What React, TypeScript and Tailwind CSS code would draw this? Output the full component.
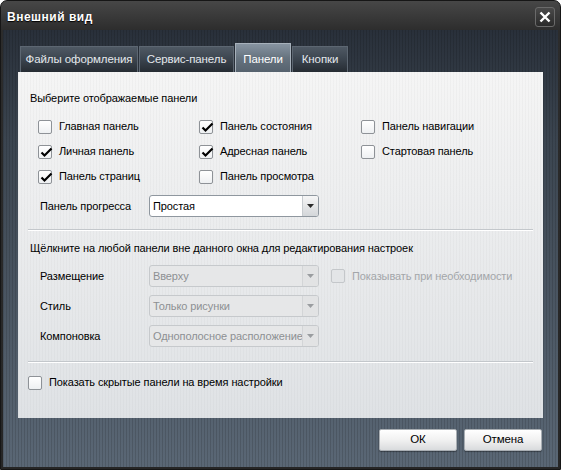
import clsx from 'clsx';

function Box({ checked, disabled }: { checked?: boolean; disabled?: boolean }) {
  return (
    <span
      className={clsx(
        'relative w-[14px] h-[14px] rounded-[2px] border shrink-0',
        disabled
          ? 'border-[#c4c7ca] bg-[#e3e5e7]'
          : 'border-[#8e9297] bg-[linear-gradient(#ffffff,#eef0f2)]'
      )}
    >
      {checked && (
        <svg className="absolute left-[1px] top-[1px]" width="13" height="11" viewBox="0 0 13 11">
          <path d="M1.5 5.5 L4.5 8.5 L11.5 1.5" fill="none" stroke="#000" strokeWidth="2.2" />
        </svg>
      )}
    </span>
  );
}

function Check({ label, checked, disabled }: { label: string; checked?: boolean; disabled?: boolean }) {
  return (
    <div className="flex items-center gap-[7px] h-[25px]">
      <Box checked={checked} disabled={disabled} />
      <span className={disabled ? 'text-[#a3a6a9]' : 'text-black'}>{label}</span>
    </div>
  );
}

function Select({ value, disabled }: { value: string; disabled?: boolean }) {
  return (
    <div
      className={clsx(
        'w-[170px] h-[22px] flex rounded-[3px] border overflow-hidden',
        disabled ? 'border-[#c6c9cc] bg-[#e6e7e8] text-[#8d9093]' : 'border-[#8f979f] bg-white text-black'
      )}
    >
      <div className="flex-1 min-w-0 pl-[3px] flex items-center whitespace-nowrap overflow-hidden">{value}</div>
      <div
        className={clsx(
          'w-[16px] shrink-0 flex items-center justify-center border-l',
          disabled ? 'border-[#d3d5d7] bg-[#e2e3e4]' : 'border-[#c7cbcf] bg-[linear-gradient(#f6f6f6,#d3d6d9)]'
        )}
      >
        <svg width="7" height="4" viewBox="0 0 7 4">
          <path d="M0 0H7L3.5 4Z" fill={disabled ? '#9a9da0' : '#2a2a2a'} />
        </svg>
      </div>
    </div>
  );
}

function Row({ label, children }: { label: string; children: React.ReactNode }) {
  return (
    <div className="flex items-center h-[30px]">
      <span className="w-[109px] shrink-0">{label}</span>
      {children}
    </div>
  );
}

function Sep() {
  return <div className="mx-[10px] h-[2px] border-t border-[#c3c7cb] bg-white" />;
}

const tabs = [
  { name: 'Файлы оформления', w: 'w-[118px]' },
  { name: 'Сервис-панель', w: 'w-[95px]' },
  { name: 'Панели', w: 'w-[56px]', active: true },
  { name: 'Кнопки', w: 'w-[56px]' },
];

export default function App() {
  return (
    <div className="w-[561px] h-[470px] bg-white font-['Liberation_Sans',Arial,sans-serif] text-[11px] tracking-[-0.1px] select-none">
      <div className="w-full h-full flex flex-col rounded-t-[7px] border border-[#161616] bg-[linear-gradient(#474747,#2c2c2c_30px,#262626)]">
        {/* Title bar */}
        <div className="h-[29px] shrink-0 flex items-center justify-between pl-[6px] pr-[5px] pt-[3px]">
          <span className="text-white font-bold text-[12px] tracking-[0.5px] [text-shadow:0_1px_1px_#000]">
            Внешний вид
          </span>
          <div className="w-[20px] h-[20px] rounded-[3px] border border-[#6a6a6a] bg-[linear-gradient(#4a4a4a,#2a2a2a)] flex items-center justify-center">
            <svg width="12" height="12" viewBox="0 0 12 12">
              <path d="M1.5 1.5L10.5 10.5M10.5 1.5L1.5 10.5" stroke="#fff" strokeWidth="2.4" />
            </svg>
          </div>
        </div>

        {/* Body */}
        <div className="flex-1 mx-[2px] mb-[2px] flex flex-col px-[15px] pt-[13px] pb-[15px] bg-[repeating-linear-gradient(90deg,rgba(0,0,0,0.13)_0px,rgba(0,0,0,0.13)_1px,transparent_1px,transparent_3px),linear-gradient(#29303a,#3b4550_25%,#5a6775)]">
          {/* Tabs */}
          <div className="flex items-end gap-[1px] h-[29px] ml-[2px]">
            {tabs.map((t) =>
              t.active ? (
                <div
                  key={t.name}
                  className={clsx(
                    t.w,
                    'h-[29px] pt-[3px] flex items-center justify-center text-white text-[11.5px] border border-b-0 border-[#a7b1bb] bg-[linear-gradient(#8794a1,#66737f_50%,#56626e)]'
                  )}
                >
                  {t.name}
                </div>
              ) : (
                <div
                  key={t.name}
                  className={clsx(
                    t.w,
                    'h-[26px] flex items-center justify-center text-[#e4e8ec] text-[11.5px] border border-b-0 border-[#5d6772] bg-[linear-gradient(#4f5964,#3b444e_50%,#262c33)]'
                  )}
                >
                  {t.name}
                </div>
              )
            )}
          </div>

          {/* Panel */}
          <div className="h-[346px] flex flex-col text-black bg-[repeating-linear-gradient(90deg,rgba(0,0,0,0.025)_0px,rgba(0,0,0,0.025)_1px,transparent_1px,transparent_3px),linear-gradient(#f5f5f5,#dfe2e5)]">
            <div className="pl-[12px] mt-[19px] h-[14px] leading-[14px]">Выберите отображаемые панели</div>

            <div className="grid grid-cols-[161px_162px_162px] pl-[20px] mt-[9px]">
              <Check label="Главная панель" />
              <Check label="Панель состояния" checked />
              <Check label="Панель навигации" />
              <Check label="Личная панель" checked />
              <Check label="Адресная панель" checked />
              <Check label="Стартовая панель" />
              <Check label="Панель страниц" checked />
              <Check label="Панель просмотра" />
            </div>

            <div className="pl-[22px] mt-[6px] flex items-center h-[22px]">
              <span className="w-[109px] shrink-0">Панель прогресса</span>
              <Select value="Простая" />
            </div>

            <div className="mt-[12px]">
              <Sep />
            </div>

            <div className="pl-[12px] mt-[10px] h-[14px] leading-[14px]">
              Щёлкните на любой панели вне данного окна для редактирования настроек
            </div>

            <div className="pl-[22px] mt-[6px] flex flex-col">
              <Row label="Размещение">
                <Select value="Вверху" disabled />
                <div className="ml-[12px]">
                  <Check label="Показывать при необходимости" disabled />
                </div>
              </Row>
              <Row label="Стиль">
                <Select value="Только рисунки" disabled />
              </Row>
              <Row label="Компоновка">
                <Select value="Однополосное расположение" disabled />
              </Row>
            </div>

            <div className="mt-[10px]">
              <Sep />
            </div>

            <div className="pl-[10px] mt-[7px]">
              <Check label="Показать скрытые панели на время настройки" />
            </div>
          </div>

          {/* Buttons */}
          <div className="flex justify-end gap-[7px] mt-[11px] pr-[1px]">
            <button className="w-[78px] h-[22px] rounded-[2px] border border-[#a9aeb3] bg-[linear-gradient(#ffffff,#f1f1f1_50%,#d9dbdd)] text-black text-[11.5px] shadow-[0_1px_1px_rgba(0,0,0,0.35)]">
              ОК
            </button>
            <button className="w-[78px] h-[22px] rounded-[2px] border border-[#a9aeb3] bg-[linear-gradient(#ffffff,#f1f1f1_50%,#d9dbdd)] text-black text-[11.5px] shadow-[0_1px_1px_rgba(0,0,0,0.35)]">
              Отмена
            </button>
          </div>
        </div>
      </div>
    </div>
  );
}
